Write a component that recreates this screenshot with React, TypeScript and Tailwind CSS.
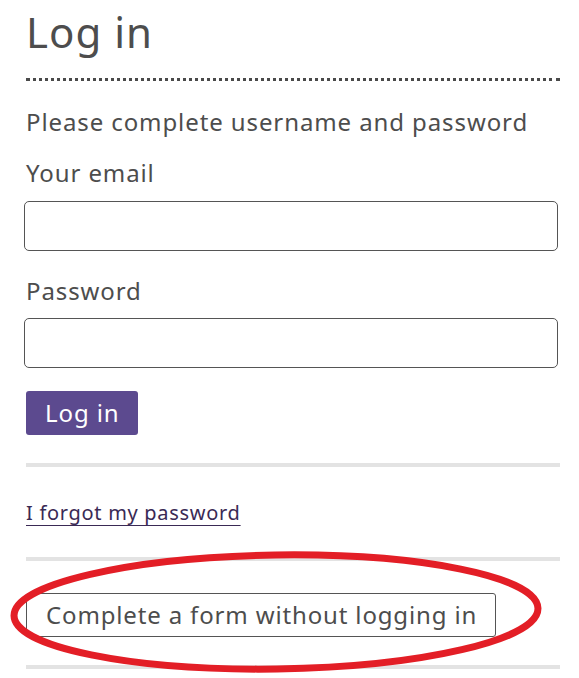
export default function App() {
  return (
    <div className="relative w-[579px] h-[678px] overflow-hidden bg-white text-[#4d4d4d]" style={{ fontFamily: '"Noto Sans", Arial, sans-serif' }}>
      <div className="pl-[24px] pr-[19px] pt-[8px]">
        <h1 className="pl-[2px] text-[42px] leading-[48px] font-normal tracking-[1px]">Log in</h1>
        <div className="ml-[2px] mt-[22px] border-b-[3px] border-dotted border-[#4a4a4a]" />

        <p className="mt-[25px] pl-[2px] text-[24px] leading-[32px] tracking-[0.9px]">Please complete username and password</p>

        <label className="block mt-[19px] pl-[2px] text-[24px] leading-[32px] tracking-[0.9px]">Your email</label>
        <input type="email" className="mt-[12px] block w-[534px] h-[50px] rounded-[5px] border border-[#555] bg-white px-3 outline-none" />

        <label className="block mt-[24px] pl-[2px] text-[24px] leading-[32px] tracking-[0.9px]">Password</label>
        <input type="password" className="mt-[11px] block w-[534px] h-[50px] rounded-[5px] border border-[#555] bg-white px-3 outline-none" />

        <button className="mt-[23px] ml-[2px] h-[44px] pl-[19px] pr-[18px] rounded-[3px] bg-[#5c4a8f] text-white text-[24px] leading-[32px] tracking-[0.9px]">Log in</button>

        <div className="ml-[2px] mt-[28px] h-[4px] bg-[#e3e3e3]" />

        <div className="mt-[31px] pl-[2px] leading-[30px]">
          <a href="#" className="text-[20px] tracking-[0.7px] text-[#3a2a55] underline underline-offset-[5px] decoration-1">I forgot my password</a>
        </div>

        <div className="ml-[2px] mt-[28px] h-[4px] bg-[#e3e3e3]" />

        <button className="mt-[32px] ml-[2px] h-[44px] pl-[19px] pr-[18px] rounded-[3px] border border-[#555] bg-white text-[24px] leading-[32px] tracking-[0.85px] text-[#4d4d4d]">
          Complete a form without logging in
        </button>

        <div className="ml-[2px] mt-[28px] h-[4px] bg-[#e3e3e3]" />
      </div>

      {/* annotation */}
      <svg className="absolute left-0 top-0 pointer-events-none" width="579" height="678" viewBox="0 0 579 678">
        <ellipse cx="276" cy="612" rx="262" ry="57" fill="none" stroke="#e31e26" strokeWidth="7" transform="rotate(-0.8 276 612)" />
      </svg>
    </div>
  )
}
